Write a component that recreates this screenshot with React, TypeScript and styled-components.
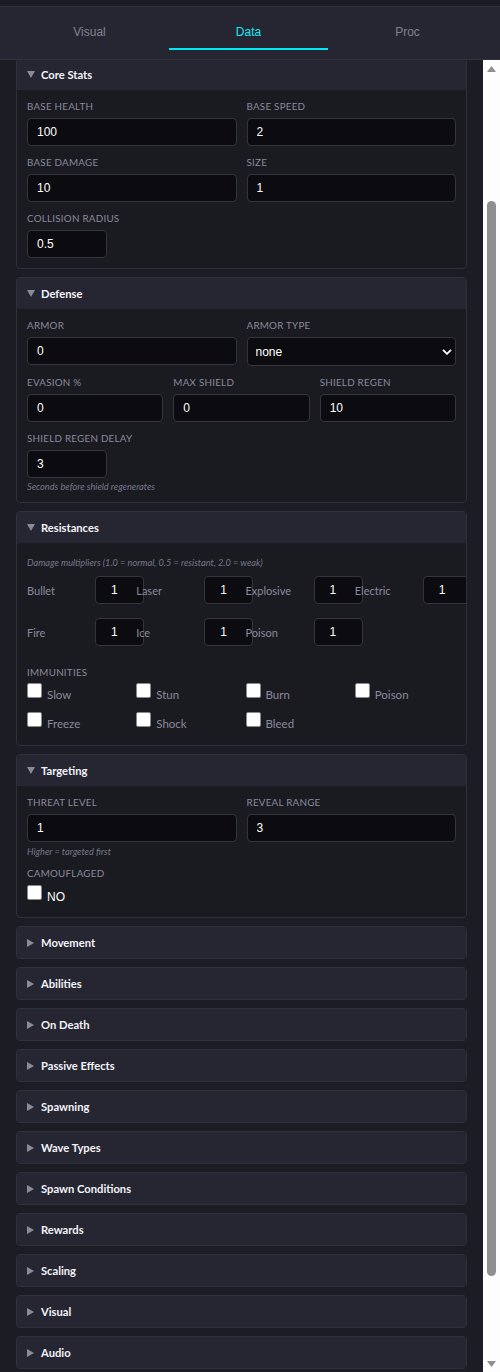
import React, { useLayoutEffect, useRef, useState } from "react";
import styled, { createGlobalStyle } from "styled-components";

const Global = createGlobalStyle`
  html, body { margin: 0; padding: 0; background: #1c1c25; }
  body { font-family: Lato, "Open Sans", sans-serif; }
  * { box-sizing: border-box; }
`;

const Shell = styled.div`
  height: 1372px;
  display: flex;
  flex-direction: column;
  background: #1c1c25;
  padding-top: 6px;
`;

const TabBar = styled.div`
  display: flex;
  flex-shrink: 0;
  background: #262632;
  border-top: 1px solid #32323f;
  border-bottom: 1px solid #32323f;
  padding: 1px 13px 9px 10px;
`;

const Tab = styled.button<{ $active?: boolean }>`
  flex: 1;
  background: none;
  border: none;
  border-bottom: 2px solid ${(p) => (p.$active ? "#00e8f8" : "transparent")};
  color: ${(p) => (p.$active ? "#1ee6f5" : "#82828f")};
  font: 12px/14px "Liberation Sans", Arial, sans-serif;
  padding: 17px 0 9px;
  cursor: pointer;
`;

const Viewport = styled.div`
  flex: 1;
  min-height: 0;
  display: flex;
`;

const Scroller = styled.div`
  position: relative;
  flex: 1;
  min-width: 0;
  overflow-y: scroll;
  background: #1c1c25;
  scrollbar-width: none;
  &::-webkit-scrollbar {
    display: none;
  }
`;

const Rail = styled.div`
  width: 17px;
  flex-shrink: 0;
  display: flex;
  flex-direction: column;
  background: #fdfdfd;
`;

const RailButton = styled.div`
  height: 17px;
  flex-shrink: 0;
  display: flex;
  align-items: center;
  justify-content: center;
`;

const Track = styled.div`
  position: relative;
  flex: 1;
`;

const Thumb = styled.div`
  position: absolute;
  left: 4px;
  width: 9px;
  border-radius: 4.5px;
  background: #8f8f8f;
`;

const Stack = styled.div`
  display: flex;
  flex-direction: column;
  gap: 8px;
  padding: 12px 16px 100px;
`;

const TopPad = styled.div`
  height: 129px;
  flex-shrink: 0;
`;

const SectionBox = styled.section`
  flex-shrink: 0;
  border: 1px solid #30303d;
  border-radius: 4px;
  overflow: hidden;
  background: #1a1a21;
`;

const SectionHeader = styled.div`
  height: 31px;
  display: flex;
  align-items: center;
  gap: 6px;
  padding: 0 10px;
  background: #262632;
  color: #f3f3f8;
  font-weight: 700;
  font-size: 11.2px;
`;

const CaretSlot = styled.span`
  width: 8px;
  display: flex;
  align-items: center;
  justify-content: flex-start;
`;

const Body = styled.div<{ $pb: number }>`
  padding: 10px 10px ${(p) => p.$pb}px;
`;

const Fields = styled.div`
  display: flex;
  flex-direction: column;
  gap: 10px;
`;

const Row = styled.div<{ $cols: number }>`
  display: grid;
  grid-template-columns: repeat(${(p) => p.$cols}, 1fr);
  gap: 10px;
`;

const Field = styled.div`
  display: flex;
  flex-direction: column;
  min-width: 0;
`;

const Label = styled.label`
  display: block;
  font-size: 9.8px;
  line-height: 13px;
  letter-spacing: 0.25px;
  text-transform: uppercase;
  color: #8a8a9c;
  margin-bottom: 5px;
`;

const Input = styled.input<{ $w?: number }>`
  width: ${(p) => (p.$w ? `${p.$w}px` : "100%")};
  height: 28px;
  background: #0c0c10;
  border: 1px solid #34343f;
  border-radius: 4px;
  color: #ffffff;
  font: 12px "Liberation Sans", Arial, sans-serif;
  padding: 0 9px;
  outline: none;
`;

const SelectWrap = styled.div`
  position: relative;
`;

const Select = styled.select`
  appearance: none;
  width: 100%;
  height: 29px;
  background: #0c0c10;
  border: 1px solid #34343f;
  border-radius: 4px;
  color: #ffffff;
  font: 12px "Liberation Sans", Arial, sans-serif;
  padding: 0 8px;
  outline: none;
`;

const Chevron = styled.svg`
  position: absolute;
  right: 4px;
  top: 12px;
  pointer-events: none;
`;

const Hint = styled.div<{ $mt?: number; $mb?: number; $lh?: number }>`
  font-size: 9.2px;
  line-height: ${(p) => p.$lh ?? 11}px;
  font-style: italic;
  color: #787889;
  margin-top: ${(p) => p.$mt ?? 3}px;
  margin-bottom: ${(p) => p.$mb ?? 0}px;
`;

const ResistGrid = styled.div`
  display: grid;
  grid-template-columns: repeat(4, 1fr);
  column-gap: 8px;
  row-gap: 14px;
`;

const ResistCell = styled.div`
  display: flex;
  align-items: center;
  min-width: 0;
`;

const ResistLabel = styled.span`
  flex: 0 0 68px;
  font-size: 11px;
  color: #8a8a9c;
`;

const ResistInput = styled(Input)`
  flex: 0 0 49px;
  width: 49px;
  padding-left: 15px;
`;

const SubLabel = styled(Label)<{ $gap: number; $after: number }>`
  margin-top: ${(p) => p.$gap}px;
  margin-bottom: ${(p) => p.$after}px;
`;

const CheckGrid = styled.div`
  display: grid;
  grid-template-columns: repeat(4, 1fr);
  column-gap: 8px;
  row-gap: 7px;
`;

const CheckItem = styled.label<{ $strong?: boolean }>`
  display: flex;
  align-items: flex-start;
  gap: 5px;
  height: 22px;
  font-size: ${(p) => (p.$strong ? "12px" : "11.5px")};
  font-family: ${(p) => (p.$strong ? '"Liberation Sans", Arial, sans-serif' : "inherit")};
  color: ${(p) => (p.$strong ? "#ffffff" : "#8a8a9c")};
`;

const Box = styled.input.attrs({ type: "checkbox" })`
  appearance: none;
  flex-shrink: 0;
  width: 15px;
  height: 15px;
  margin: 0;
  background: #ffffff;
  border: 1px solid #8a8a8a;
  border-radius: 2px;
`;

const CheckText = styled.span`
  margin-top: 5px;
  line-height: 14px;
`;

const Caret = ({ open }: { open: boolean }) =>
  open ? (
    <svg width="8" height="7" viewBox="0 0 8 7">
      <path d="M0 0 H8 L4 7 Z" fill="#8a8a9a" />
    </svg>
  ) : (
    <svg width="7" height="8" viewBox="0 0 7 8">
      <path d="M0 0 L7 4 L0 8 Z" fill="#8a8a9a" />
    </svg>
  );

const Section = React.forwardRef<
  HTMLElement,
  { title: string; open?: boolean; pb?: number; children?: React.ReactNode }
>(({ title, open = false, pb = 10, children }, ref) => (
  <SectionBox ref={ref}>
    <SectionHeader>
      <CaretSlot>
        <Caret open={open} />
      </CaretSlot>
      {title}
    </SectionHeader>
    {open && <Body $pb={pb}>{children}</Body>}
  </SectionBox>
));

const TextField = ({ label, value, w }: { label: string; value: string; w?: number }) => (
  <Field>
    <Label>{label}</Label>
    <Input $w={w} defaultValue={value} />
  </Field>
);

const resist = [
  ["Bullet", "1"],
  ["Laser", "1"],
  ["Explosive", "1"],
  ["Electric", "1"],
  ["Fire", "1"],
  ["Ice", "1"],
  ["Poison", "1"],
];

const immunities = ["Slow", "Stun", "Burn", "Poison", "Freeze", "Shock", "Bleed"];

const collapsed = [
  "Movement",
  "Abilities",
  "On Death",
  "Passive Effects",
  "Spawning",
  "Wave Types",
  "Spawn Conditions",
  "Rewards",
  "Scaling",
  "Visual",
  "Audio",
];

export default function App() {
  const scrollRef = useRef<HTMLDivElement>(null);
  const trackRef = useRef<HTMLDivElement>(null);
  const coreRef = useRef<HTMLElement>(null);
  const [thumb, setThumb] = useState({ top: 0, height: 0 });

  useLayoutEffect(() => {
    const s = scrollRef.current;
    const t = trackRef.current;
    if (!s || !t) return;
    if (coreRef.current) s.scrollTop = coreRef.current.offsetTop + 2;
    const update = () => {
      const track = t.clientHeight;
      setThumb({
        top: (s.scrollTop / s.scrollHeight) * track,
        height: (s.clientHeight / s.scrollHeight) * track,
      });
    };
    update();
    s.addEventListener("scroll", update);
    return () => s.removeEventListener("scroll", update);
  }, []);

  return (
    <>
      <Global />
      <Shell>
        <TabBar>
          <Tab>Visual</Tab>
          <Tab $active>Data</Tab>
          <Tab>Proc</Tab>
        </TabBar>
        <Viewport>
          <Scroller ref={scrollRef}>
            <Stack>
              <TopPad />

              <Section title="Core Stats" open ref={coreRef}>
                <Fields>
                  <Row $cols={2}>
                    <TextField label="Base Health" value="100" />
                    <TextField label="Base Speed" value="2" />
                  </Row>
                  <Row $cols={2}>
                    <TextField label="Base Damage" value="10" />
                    <TextField label="Size" value="1" />
                  </Row>
                  <TextField label="Collision Radius" value="0.5" w={80} />
                </Fields>
              </Section>

              <Section title="Defense" open>
                <Fields>
                  <Row $cols={2}>
                    <TextField label="Armor" value="0" />
                    <Field>
                      <Label>Armor Type</Label>
                      <SelectWrap>
                        <Select defaultValue="none">
                          <option value="none">none</option>
                          <option value="light">light</option>
                          <option value="heavy">heavy</option>
                        </Select>
                        <Chevron width="10" height="6" viewBox="0 0 10 6">
                          <path d="M1 0.8 L5 4.8 L9 0.8" fill="none" stroke="#ffffff" strokeWidth="1.8" />
                        </Chevron>
                      </SelectWrap>
                    </Field>
                  </Row>
                  <Row $cols={3}>
                    <TextField label="Evasion %" value="0" />
                    <TextField label="Max Shield" value="0" />
                    <TextField label="Shield Regen" value="10" />
                  </Row>
                  <Field>
                    <Label>Shield Regen Delay</Label>
                    <Input $w={80} defaultValue="3" />
                    <Hint>Seconds before shield regenerates</Hint>
                  </Field>
                </Fields>
              </Section>

              <Section title="Resistances" open pb={11}>
                <Hint $mt={3} $mb={6} $lh={14}>
                  Damage multipliers (1.0 = normal, 0.5 = resistant, 2.0 = weak)
                </Hint>
                <ResistGrid>
                  {resist.map(([name, v]) => (
                    <ResistCell key={name}>
                      <ResistLabel>{name}</ResistLabel>
                      <ResistInput defaultValue={v} />
                    </ResistCell>
                  ))}
                </ResistGrid>
                <SubLabel $gap={20} $after={4}>Immunities</SubLabel>
                <CheckGrid>
                  {immunities.map((n) => (
                    <CheckItem key={n}>
                      <Box />
                      <CheckText>{n}</CheckText>
                    </CheckItem>
                  ))}
                </CheckGrid>
              </Section>

              <Section title="Targeting" open>
                <Row $cols={2}>
                  <Field>
                    <Label>Threat Level</Label>
                    <Input defaultValue="1" />
                    <Hint $mt={4}>Higher = targeted first</Hint>
                  </Field>
                  <TextField label="Reveal Range" value="3" />
                </Row>
                <SubLabel $gap={10} $after={5}>Camouflaged</SubLabel>
                <CheckItem $strong>
                  <Box />
                  <CheckText>NO</CheckText>
                </CheckItem>
              </Section>

              {collapsed.map((t) => (
                <Section key={t} title={t} />
              ))}
            </Stack>
          </Scroller>
          <Rail>
            <RailButton>
              <svg width="9" height="6" viewBox="0 0 9 6">
                <path d="M0 6 L4.5 0 L9 6 Z" fill="#8f8f8f" />
              </svg>
            </RailButton>
            <Track ref={trackRef}>
              <Thumb style={{ top: thumb.top, height: thumb.height }} />
            </Track>
            <RailButton>
              <svg width="9" height="6" viewBox="0 0 9 6">
                <path d="M0 0 L9 0 L4.5 6 Z" fill="#8f8f8f" />
              </svg>
            </RailButton>
          </Rail>
        </Viewport>
      </Shell>
    </>
  );
}
